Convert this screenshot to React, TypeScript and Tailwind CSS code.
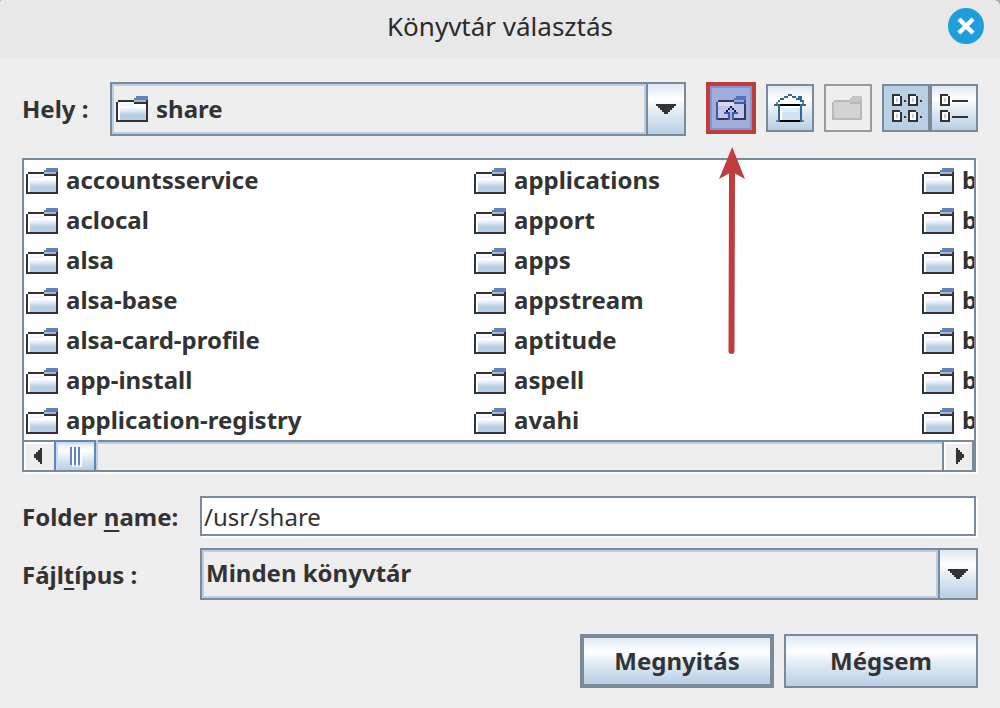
import React, { useState } from "react";

const folders = [
  "accountsservice",
  "aclocal",
  "alsa",
  "alsa-base",
  "alsa-card-profile",
  "app-install",
  "application-registry",
  "applications",
  "apport",
  "apps",
  "appstream",
  "aptitude",
  "aspell",
  "avahi",
  "b",
  "b",
  "b",
  "b",
  "b",
  "b",
  "b",
];

const metal = "bg-[linear-gradient(#dde8f3,#ffffff_30%,#dde8f3_60%,#b8cfe5)]";

const FolderIcon = () => (
  <svg width="32" height="26" viewBox="0 0 16 13" shapeRendering="crispEdges" className="shrink-0" aria-hidden="true">
    <path d="M1 3h14v9H1z" fill="#fff" />
    <path d="M2 4h7v1H2z" fill="#f0f5fa" />
    <path d="M2 6h13v1H2z" fill="#eef3f9" />
    <path d="M2 7h13v1H2z" fill="#dde8f3" />
    <path d="M2 8h13v1H2z" fill="#c8d9eb" />
    <path d="M2 9h13v3H2z" fill="#b8cfe5" />
    <path d="M0 3h1v10H0zM1 2h8v1H1zM9 3h6v1H9zM15 2h1v11h-1zM1 12h15v1H1z" fill="#333" />
    <path d="M10 0h6v2H9V1h1z" fill="#6382bf" />
    <path d="M9 2h6v1H9z" fill="#a3b8cc" />
  </svg>
);

const UpFolderIcon = () => (
  <svg width="30" height="24" viewBox="0 0 15 12" shapeRendering="crispEdges" aria-hidden="true">
    <path d="M1 3h13v8H1z" fill="#c1c5eb" />
    <path d="M1 3h8v2H1z" fill="#d9d5f3" />
    <path d="M1 2h8v1H1zM14 4h1v8h-1zM1 11h13v1H1z" fill="#3a3457" />
    <path d="M0 3h1v9H0zM9 3h6v1H9z" fill="#3d5ca5" />
    <path d="M10 0h5v2H9V1h1z" fill="#5b6fc0" />
    <path d="M9 2h5v1H9z" fill="#97a6da" />
    <path d="M14 2h1v1h-1z" fill="#3d5ca5" />
    <path d="M7 5h1v1H7zM6 6h1v1H6zM8 6h1v1H8zM5 7h1v1H5zM9 7h1v1H9z" fill="#111238" />
    <path d="M4 8h3v4H6V9H4zM8 8h3v1H9v3H8z" fill="#3d5ca5" />
    <path d="M7 7h1v5H7z" fill="#a3b0df" />
  </svg>
);

const HomeIcon = () => (
  <svg width="32" height="28" viewBox="0 0 16 14" shapeRendering="crispEdges" aria-hidden="true">
    <path d="M7 1h2v1h2v1h2v1h1v1H2V4h1V3h2V2h2z" fill="#fff" />
    <path d="M3 6h10v7H3z" fill="#fff" />
    <path d="M4 7h9v6H4z" fill="#d3e2f0" />
    <path d="M4 7h8v2H4z" fill="#e2edf6" />
    <path
      d="M7 0h2v1H7zM5 1h2v1H5zM9 1h2v1H9zM12 1h2v3h-1V3h-2V2h1zM3 2h2v1H3zM2 3h1v1H2zM1 4h1v1H1zM14 3h1v2h-1zM0 5h3v9H2V6H0zM13 5h3v1h-2v8h-1z"
      fill="#336699"
    />
    <path d="M3 5h10v1H3zM3 13h10v1H3z" fill="#000" />
    <path d="M1 4h1v1H1zM14 4h1v1h-1zM1 13h1v1H1zM14 13h1v1h-1z" fill="#7a8a99" />
  </svg>
);

const NewFolderIcon = () => (
  <svg width="30" height="24" viewBox="0 0 15 12" shapeRendering="crispEdges" aria-hidden="true">
    <path d="M1 3h13v8H1z" fill="#d3d3d3" />
    <path d="M0 3h1v9H0zM1 2h8v1H1zM9 3h6v1H9zM14 2h1v10h-1zM1 11h14v1H1z" fill="#b9b9b9" />
    <path d="M10 0h5v2h-1v1H9V1h1z" fill="#c5c5c5" />
  </svg>
);

const Page = ({ x, y }: { x: number; y: number }) => (
  <g transform={`translate(${x} ${y})`}>
    <path d="M1 1h3v4H1z" fill="#fff" />
    <path d="M2 2h1v2H2z" fill="#b8cfe5" />
    <path d="M0 0h4v1H0zM0 1h1v5H0zM4 1h1v5H4zM1 5h3v1H1z" fill="#333" />
  </g>
);

const ListIcon = () => (
  <svg width="30" height="28" viewBox="0 0 15 14" shapeRendering="crispEdges" aria-hidden="true">
    <Page x={0} y={0} />
    <Page x={8} y={0} />
    <Page x={0} y={8} />
    <Page x={8} y={8} />
    <path d="M6 3h1v1H6zM14 3h1v1h-1zM6 11h1v1H6zM14 11h1v1h-1z" fill="#333" />
  </svg>
);

const DetailsIcon = () => (
  <svg width="28" height="28" viewBox="0 0 14 14" shapeRendering="crispEdges" aria-hidden="true">
    <Page x={0} y={0} />
    <Page x={0} y={8} />
    <path d="M6 3h8v1H6zM6 11h8v1H6z" fill="#333" />
  </svg>
);

interface ComboProps {
  id: string;
  options: string[];
  icon?: React.ReactNode;
  className?: string;
}

const Combo = ({ id, options, icon, className }: ComboProps) => (
  <div className={`grid grid-cols-[1fr_38px] min-w-0 flex-1 border-2 border-[#7a8a99] ${className || ""}`}>
    <select
      id={id}
      className={`col-start-1 col-span-2 row-start-1 w-full appearance-none border-2 border-[#b8cfe5] bg-[#eeeeee] pr-10 text-[#333333] outline-none ${
        icon ? "pl-[42px]" : "pb-[2px] pl-[2px]"
      }`}
    >
      {options.map((option) => (
        <option key={option}>{option}</option>
      ))}
    </select>
    {icon && (
      <span className="pointer-events-none col-start-1 row-start-1 self-center justify-self-start pl-1">{icon}</span>
    )}
    <span className="pointer-events-none col-start-1 row-start-1 w-[2px] justify-self-end bg-[#b8cfe5]" />
    <span
      className={`pointer-events-none col-start-2 row-start-1 flex items-center justify-center border-l-2 border-[#7a8a99] ${metal}`}
    >
      <svg width="20" height="10" viewBox="0 0 10 5" shapeRendering="crispEdges" aria-hidden="true">
        <path d="M0 0h10v1H9v1H8v1H7v1H6v1H4V4H3V3H2V2H1V1H0z" fill="#333" />
      </svg>
    </span>
  </div>
);

const App = () => {
  const [path, setPath] = useState("/usr/share");
  const [details, setDetails] = useState(false);

  return (
    <div className="min-h-screen bg-[#eeeeee] font-['Noto_Sans',sans-serif] text-[24px] leading-8 font-bold text-[#333333]">
      <header className="bg-[#a8a8a8]">
        <div className="grid h-[58px] grid-cols-[1fr_auto_1fr] items-center rounded-tl-[2px] rounded-tr-[6px] bg-[#e8e8e8] px-4 pb-[6px]">
          <h1 className="col-start-2 text-[26px] font-normal text-[#2b2b2b]">Könyvtár választás</h1>
          <button aria-label="Bezárás" className="justify-self-end">
            <svg width="36" height="36" viewBox="0 0 36 36">
              <circle cx="18" cy="18" r="18" fill="#1f9ede" />
              <path d="M12.500 12.500l11 11M23.500 12.500l-11 11" stroke="#fff" strokeWidth="4.400" strokeLinecap="square" />
            </svg>
          </button>
        </div>
      </header>

      <main className="px-[22px] pt-6 pb-5">
        <div className="flex h-[54px] items-center">
          <label htmlFor="location" className="w-[88px] shrink-0">
            Hely :
          </label>
          <Combo id="location" options={["share"]} icon={<FolderIcon />} className="h-full" />

          <div className="ml-5 flex shrink-0 items-center gap-[10px] pb-[2px]">
            <div className="relative">
              <button
                aria-label="Egy szinttel feljebb"
                className="flex h-[52px] w-[50px] items-center justify-center border-4 border-[#c03d3e] bg-[#a1addc] shadow-[inset_0_0_0_2px_#8793cc]"
              >
                <UpFolderIcon />
              </button>
              {/* pointer towards the "up one level" button */}
              <svg
                width="28"
                height="208"
                viewBox="0 0 28 208"
                className="pointer-events-none absolute top-[65px] left-3 z-10"
                aria-hidden="true"
              >
                <path d="M14.200 0L27 32L17 26.500L16.500 204a3 3 0 0 1-6 0L11 26.500L1 32z" fill="#c03d3e" />
              </svg>
            </div>
            <button
              aria-label="Saját könyvtár"
              className={`flex size-12 items-center justify-center border-2 border-[#7a8a99] ${metal}`}
            >
              <HomeIcon />
            </button>
            <button
              aria-label="Új könyvtár"
              disabled
              className="flex size-12 items-center justify-center border-2 border-[#999999] pr-[2px]"
            >
              <NewFolderIcon />
            </button>
            <div className="flex">
              <button
                aria-label="Lista"
                aria-pressed={!details}
                onClick={() => setDetails(false)}
                className="flex size-12 items-center justify-center border-2 border-[#7a8a99] bg-[#b8cfe5] pl-[2px]"
              >
                <ListIcon />
              </button>
              <button
                aria-label="Részletek"
                aria-pressed={details}
                onClick={() => setDetails(true)}
                className={`flex size-12 items-center justify-center border-2 border-[#7a8a99] ${metal}`}
              >
                <DetailsIcon />
              </button>
            </div>
          </div>
        </div>

        <section className="mt-[22px] mr-[2px] border-2 border-[#7a8a99] bg-white shadow-[2px_2px_0_#ffffff]">
          <ul className="grid h-[280px] auto-cols-[448px] grid-flow-col grid-rows-[repeat(7,40px)] overflow-hidden pt-px">
            {folders.map((name, index) => (
              <li key={index}>
                <button className="flex h-10 w-full items-center gap-2 pl-[2px] text-left">
                  <FolderIcon />
                  <span className="pb-[2px]">{name}</span>
                </button>
              </li>
            ))}
          </ul>

          <div className="flex h-[30px] border-t-2 border-[#7a8a99] bg-[#eeeeee]">
            <button
              aria-label="Balra"
              className="flex w-[30px] shrink-0 items-center justify-center pr-[2px] pb-[2px] pt-[2px] shadow-[inset_2px_2px_0_#ffffff]"
            >
              <svg width="8" height="16" viewBox="0 0 4 8" shapeRendering="crispEdges" aria-hidden="true">
                <path d="M3 0h1v8H3V7H2V6H1V5H0V3h1V2h1V1h1z" fill="#333" />
              </svg>
            </button>
            <div className="flex flex-1 border-t-2 border-[#b8cfe5]">
              <div
                className={`-mt-1 flex w-[42px] items-center justify-center gap-[2px] border-2 border-b-0 border-[#6382bf] shadow-[2px_0_0_#b8cfe5,inset_2px_2px_0_#c8ddf2] ${metal}`}
              >
                <span className="h-[18px] w-[2px] bg-[#6382bf] shadow-[2px_2px_0_#ffffff]" />
                <span className="h-[18px] w-[2px] bg-[#6382bf] shadow-[2px_2px_0_#ffffff]" />
                <span className="h-[18px] w-[2px] bg-[#6382bf] shadow-[2px_2px_0_#ffffff]" />
              </div>
            </div>
            <button
              aria-label="Jobbra"
              className="flex w-8 shrink-0 items-center justify-center border-r-2 border-l-2 border-[#7a8a99] pl-1 shadow-[inset_2px_2px_0_#ffffff]"
            >
              <svg width="8" height="16" viewBox="0 0 4 8" shapeRendering="crispEdges" aria-hidden="true">
                <path d="M0 0h1v1h1v1h1v1h1v2H3v1H2v1H1v1H0z" fill="#333" />
              </svg>
            </button>
          </div>
        </section>

        <div className="mt-6 flex items-center">
          <label htmlFor="folder" className="w-[178px] shrink-0 pt-[2px]">
            Folder <u className="underline-offset-4">n</u>ame:
          </label>
          <input
            id="folder"
            type="text"
            value={path}
            onChange={(e) => setPath(e.target.value)}
            className="mr-[2px] h-10 min-w-0 flex-1 border-2 border-[#7a8a99] bg-white pl-[2px] font-normal shadow-[2px_2px_0_#ffffff] outline-none"
          />
        </div>

        <div className="mt-3 flex h-[52px] items-center">
          <label htmlFor="filter" className="w-[178px] shrink-0 pt-[2px]">
            Fájl<u className="underline-offset-4">t</u>ípus :
          </label>
          <Combo id="filter" options={["Minden könyvtár"]} className="h-full" />
        </div>

        <div className="mt-[34px] flex justify-end gap-[10px]">
          <button className={`h-[54px] w-[194px] border-4 border-[#7a8a99] ${metal}`}>Megnyitás</button>
          <button className={`h-[54px] w-[194px] border-2 border-[#7a8a99] ${metal}`}>Mégsem</button>
        </div>
      </main>
    </div>
  );
};

export default App;
